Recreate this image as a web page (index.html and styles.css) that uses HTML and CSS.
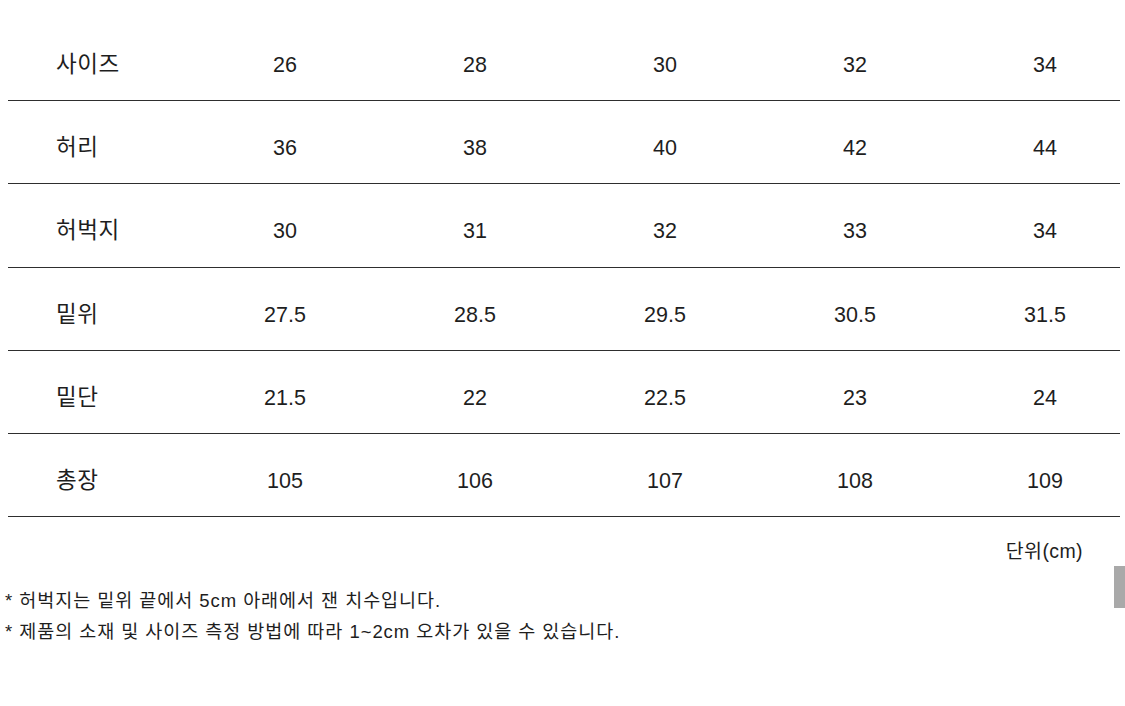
FILE: index.html
```html
<!DOCTYPE html>
<html lang="ko">
<head>
<meta charset="utf-8">
<link rel="stylesheet" href="styles.css">
</head>
<body>
<div class="page">
  <div class="table">
    <div class="row"><div class="label">사이즈</div><div class="cell">26</div><div class="cell">28</div><div class="cell">30</div><div class="cell">32</div><div class="cell">34</div></div>
    <div class="row"><div class="label">허리</div><div class="cell">36</div><div class="cell">38</div><div class="cell">40</div><div class="cell">42</div><div class="cell">44</div></div>
    <div class="row"><div class="label">허벅지</div><div class="cell">30</div><div class="cell">31</div><div class="cell">32</div><div class="cell">33</div><div class="cell">34</div></div>
    <div class="row"><div class="label">밑위</div><div class="cell">27.5</div><div class="cell">28.5</div><div class="cell">29.5</div><div class="cell">30.5</div><div class="cell">31.5</div></div>
    <div class="row"><div class="label">밑단</div><div class="cell">21.5</div><div class="cell">22</div><div class="cell">22.5</div><div class="cell">23</div><div class="cell">24</div></div>
    <div class="row"><div class="label">총장</div><div class="cell">105</div><div class="cell">106</div><div class="cell">107</div><div class="cell">108</div><div class="cell">109</div></div>
  </div>
  <div class="unit">단위(cm)</div>
  <div class="notes">
    <p>* 허벅지는 밑위 끝에서 5cm 아래에서 잰 치수입니다.</p>
    <p>* 제품의 소재 및 사이즈 측정 방법에 따라 1~2cm 오차가 있을 수 있습니다.</p>
  </div>
</div>
<div class="scrollbar"></div>
</body>
</html>
```
FILE: styles.css
```css
html, body {
  margin: 0;
  padding: 0;
  background: #ffffff;
}
body {
  font-family: "Liberation Sans", "Noto Sans CJK KR", sans-serif;
  color: #1e1e1e;
  width: 1125px;
  height: 706px;
  overflow: hidden;
  position: relative;
}
.page {
  padding-top: 18px;
}
.table {
  margin-left: 8px;
  width: 1112px;
}
.row {
  display: grid;
  grid-template-columns: 182px 190px 190px 190px 190px 190px;
  height: 83.2px;
  box-sizing: border-box;
  border-bottom: 1.5px solid #2e2e2e;
  align-items: center;
  padding-top: 12px;
  font-size: 21.5px;
  line-height: 26px;
}
.label {
  padding-left: 48px;
  font-size: 22.5px;
  letter-spacing: 0.5px;
}
.cell {
  text-align: center;
}
.unit {
  margin-top: 22px;
  width: 1083px;
  text-align: right;
  font-size: 19.5px;
  letter-spacing: 0.4px;
  line-height: 24px;
}
.notes {
  margin-top: 27px;
  padding-left: 5px;
  font-size: 18.5px;
  letter-spacing: 0.95px;
  line-height: 22px;
}
.notes p {
  margin: 0 0 9px 0;
}
.scrollbar {
  position: absolute;
  left: 1114px;
  top: 566px;
  width: 11px;
  height: 42px;
  background: #a9a9a9;
}
```
